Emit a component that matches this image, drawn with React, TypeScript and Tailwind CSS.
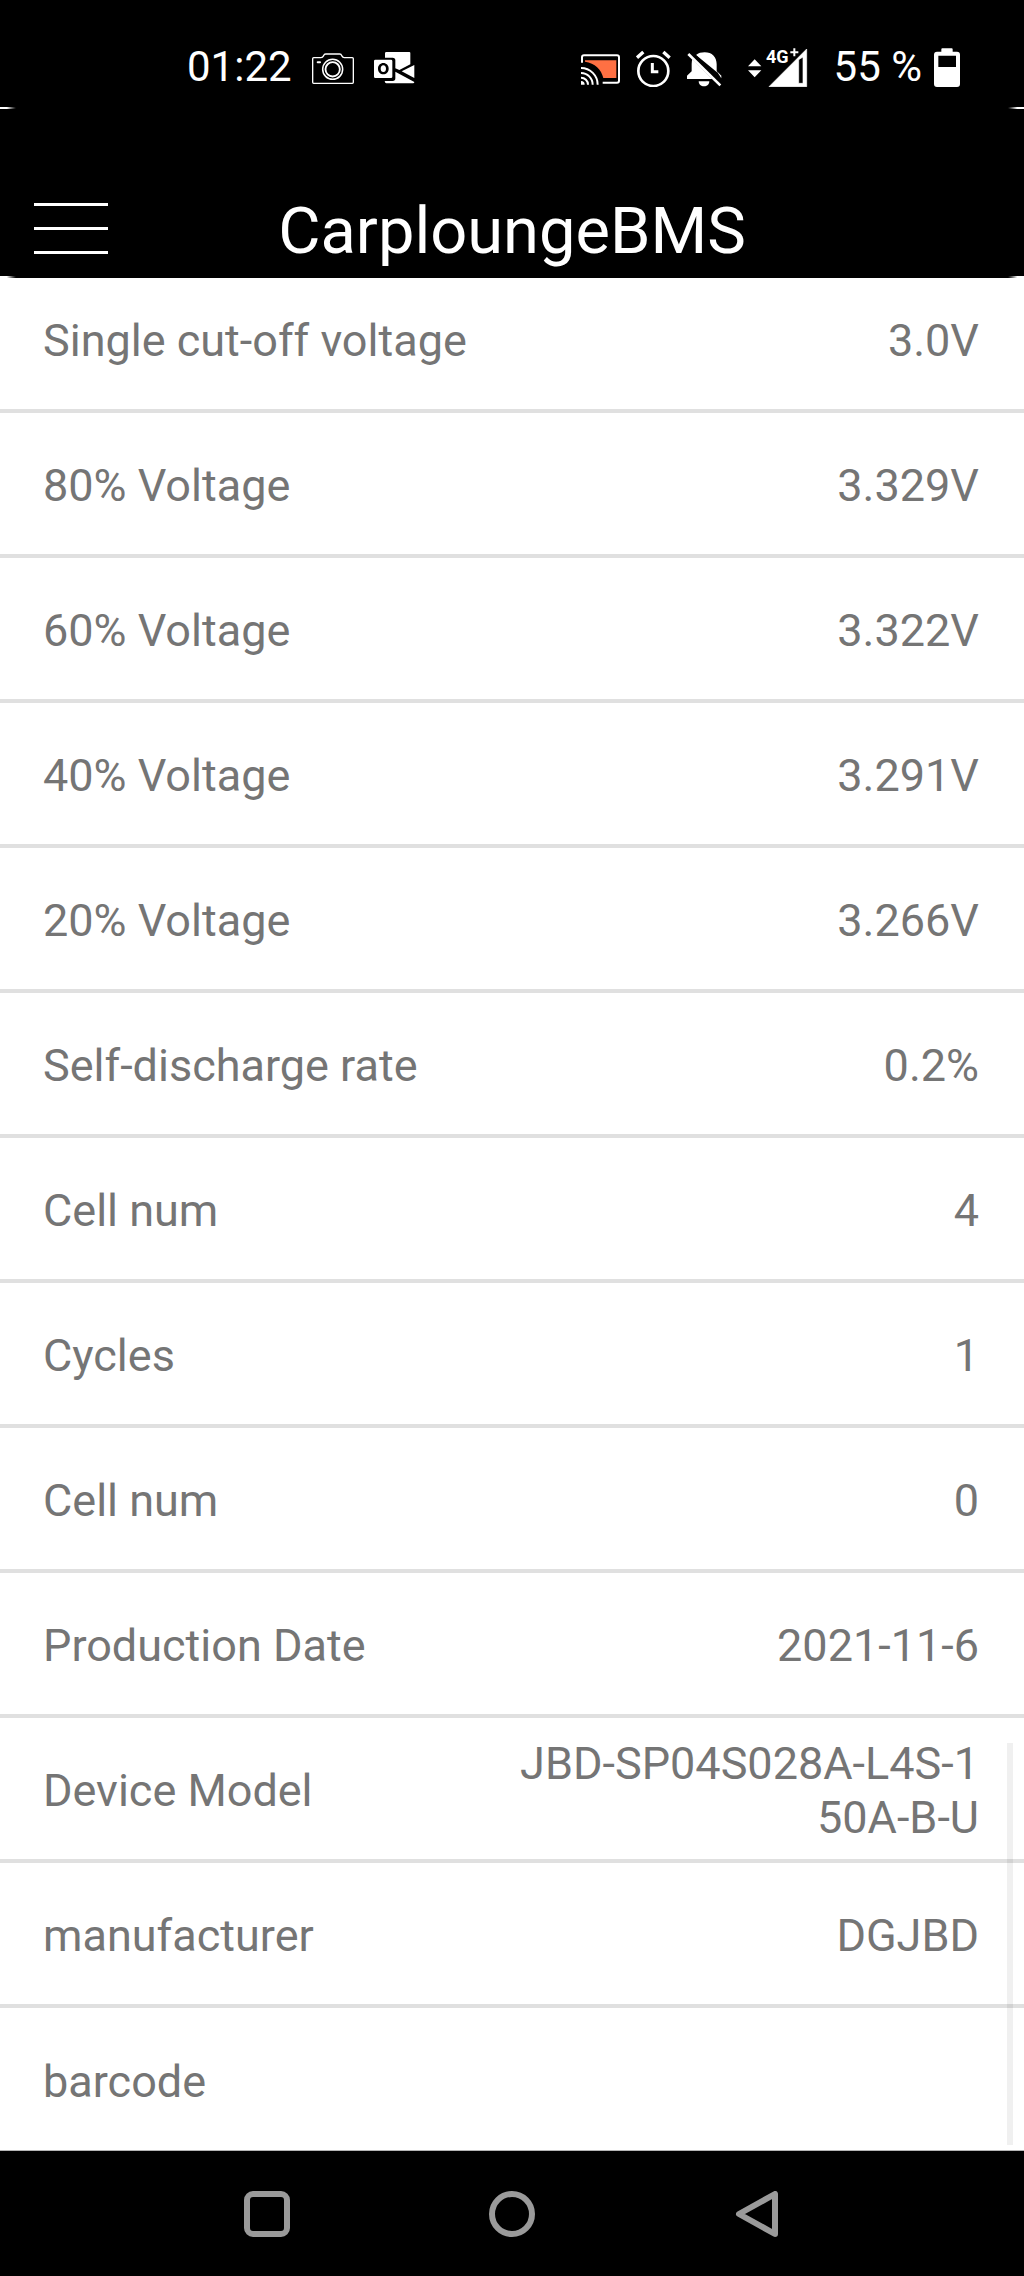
import { useState } from 'react';

interface InfoRow {
  label: string;
  value: string;
}

const rows: InfoRow[] = [
  { label: 'Single cut-off voltage', value: '3.0V' },
  { label: '80% Voltage', value: '3.329V' },
  { label: '60% Voltage', value: '3.322V' },
  { label: '40% Voltage', value: '3.291V' },
  { label: '20% Voltage', value: '3.266V' },
  { label: 'Self-discharge rate', value: '0.2%' },
  { label: 'Cell num', value: '4' },
  { label: 'Cycles', value: '1' },
  { label: 'Cell num', value: '0' },
  { label: 'Production Date', value: '2021-11-6' },
  { label: 'Device Model', value: 'JBD-SP04S028A-L4S-150A-B-U' },
  { label: 'manufacturer', value: 'DGJBD' },
  { label: 'barcode', value: '' },
];

const CameraIcon = () => (
  <svg className="h-10 w-[42px]" viewBox="0 0 126 120" fill="none" stroke="white" strokeWidth="4" aria-hidden="true">
    <path d="M5 32h22c4 0 6-2 8-6 1-4 3-5 6-5h42c3 0 5 1 6 5 2 4 4 6 8 6h24q3 0 3 3v71q0 3-3 3H5q-3 0-3-3V35q0-3 3-3z" />
    <circle cx="62" cy="67" r="30" strokeWidth="4.5" />
    <circle cx="62" cy="67" r="21.5" strokeWidth="5.5" />
    <rect x="14" y="43" width="13" height="6" rx="3" fill="white" stroke="none" />
  </svg>
);

const OutlookIcon = () => (
  <svg className="h-10 w-[41px]" viewBox="0 0 123 120" fill="white" aria-hidden="true">
    <path d="M37 15h69q3 0 3 3v34L76 69l-12-5V40q0-8-8-8H33V19q0-4 4-4z" />
    <path d="M121 54v39L83 73z" />
    <path d="M64 74l57 31q0 4-4 4H37q-4 0-5-7h24q8 0 8-8z" />
    <path
      fillRule="evenodd"
      d="M4 38h47q4 0 4 4v47q0 4-4 4H4q-4 0-4-4V42q0-4 4-4zM28 48c-9 0-16 7-16 17s7 17 16 17 16-7 16-17-7-17-16-17zM28 55c5 0 8 4 8 10s-3 10-8 10-8-4-8-10 3-10 8-10z"
    />
  </svg>
);

const CastIcon = () => (
  <svg className="h-10 w-[39px]" viewBox="0 0 117 120" fill="none" stroke="white" strokeWidth="6" aria-hidden="true">
    <path d="M3 47V31q0-6 6-6h99q6 0 6 6v70q0 6-6 6H65" />
    <path d="M12 40h94v53H67C61 67 42 49 12 44z" fill="#ff7043" stroke="none" />
    <path d="M0 63a50 50 0 0 1 50 50M0 78a35 35 0 0 1 35 35" />
    <path d="M0 92a21 21 0 0 1 21 21" />
    <path d="M0 102a11 11 0 0 1 11 11H0z" fill="white" stroke="none" />
  </svg>
);

const AlarmIcon = () => (
  <svg className="h-10 w-[35px]" viewBox="0 0 105 120" fill="none" stroke="white" strokeWidth="8" aria-hidden="true">
    <circle cx="52" cy="72" r="45" />
    <path d="M49 48v26h18" strokeWidth="9" />
    <path d="M3 32l19-17M82 15l19 17" strokeWidth="10" />
  </svg>
);

const BellOffIcon = () => (
  <svg className="h-10 w-[35px]" viewBox="0 0 105 120" fill="white" aria-hidden="true">
    <path d="M27 24c7-6 16-8 26-8 22 0 36 14 36 36v20l3 5z" />
    <path d="M16 37l60 59H0V86l14-13V50q0-7 2-13z" />
    <path d="M89 72l14 14v8z" />
    <path d="M35 103h32c0 9-7 15-16 15s-16-6-16-15z" />
    <path d="M11 14l92 90" stroke="black" strokeWidth="8" />
    <path d="M4 21l96 94" stroke="white" strokeWidth="8" />
  </svg>
);

const SignalIcon = () => (
  <svg className="h-10 w-[60px]" viewBox="0 0 180 120" fill="white" aria-hidden="true">
    <path d="M0 58l20-21 20 21zM0 70h40L20 91z" />
    <path fillRule="evenodd" d="M63 119L176 6v113zM152 38v71h13V30z" strokeWidth="2" stroke="white" strokeLinejoin="round" />
    <text x="54" y="48" fontFamily="Roboto" fontWeight="700" fontSize="54" stroke="black" strokeWidth="6" paintOrder="stroke">
      4G
    </text>
    <path d="M139 4v24M127 16h24" stroke="black" strokeWidth="12" />
    <path d="M139 4v24M127 16h24" stroke="white" strokeWidth="6" />
  </svg>
);

const BatteryIcon = () => (
  <svg className="h-10 w-[26px]" viewBox="0 0 78 120" fill="white" aria-hidden="true">
    <path
      fillRule="evenodd"
      d="M25 4h28q3 0 3 3v7h13q9 0 9 9v88q0 9-9 9H9q-9 0-9-9V23q0-9 9-9h13V7q0-3 3-3zM13 26v34h53V26z"
    />
  </svg>
);

// slivers of white left by the rounded screen corners
const CornerEdge = () => (
  <div className="flex justify-between" aria-hidden="true">
    <span className="h-0.5 w-[17px] bg-linear-to-r from-white from-40% to-black" />
    <span className="h-0.5 w-[17px] bg-linear-to-l from-white from-40% to-black" />
  </div>
);

const StatusBar = () => (
  <div className="flex h-[107px] items-center justify-between pt-[27px] pr-16 pl-[187px] text-[42px] leading-none text-white">
    <div className="flex items-center gap-5">
      <span>01:22</span>
      <CameraIcon />
      <OutlookIcon />
    </div>
    <div className="flex items-center gap-[26px]">
      <div className="flex items-center gap-4">
        <CastIcon />
        <AlarmIcon />
        <BellOffIcon />
      </div>
      <SignalIcon />
      <div className="flex items-center gap-3">
        <span>55 %</span>
        <BatteryIcon />
      </div>
    </div>
  </div>
);

const App: React.FC = () => {
  const [menuOpen, setMenuOpen] = useState(false);

  return (
    <div className="flex min-h-screen flex-col bg-black font-['Roboto',sans-serif]">
      <StatusBar />
      <header>
        <CornerEdge />
        <div className="grid h-[167px] grid-cols-[1fr_auto_1fr] items-center px-[34px] pt-[71px]">
          <button
            type="button"
            aria-label="Menu"
            aria-expanded={menuOpen}
            onClick={() => setMenuOpen(!menuOpen)}
            className="flex w-[74px] flex-col gap-[21px]"
          >
            <span className="h-[3px] w-full bg-white" />
            <span className="h-[3px] w-full bg-white" />
            <span className="h-[3px] w-full bg-white" />
          </button>
          <h1 className="pt-1.5 text-[65px] leading-none text-white">CarploungeBMS</h1>
        </div>
        <CornerEdge />
      </header>

      <main className="relative grow overflow-hidden bg-white">
        <dl className="-mt-2.5 text-[45px] leading-[54px] text-[#757575]">
          {rows.map((row, i) => (
            <div
              key={i}
              className="flex min-h-[145px] items-center justify-between border-b-4 border-[#e0e0e0] pt-[5px] pr-[45px] pl-[43px] last:min-h-[143px] last:border-b last:border-[#b5b5b5]"
            >
              <dt>{row.label}</dt>
              <dd className="w-1/2 text-right break-all">{row.value}</dd>
            </div>
          ))}
        </dl>
        <div className="absolute right-[11px] bottom-1.5 h-[402px] w-1.5 bg-black/6" aria-hidden="true" />
      </main>

      <nav className="grid h-[125px] grid-cols-3 items-center justify-items-center bg-black px-36">
        <button type="button" aria-label="Recent apps">
          <svg className="size-[46px]" viewBox="0 0 46 46" fill="none" stroke="#9a9a9a" strokeWidth="6">
            <rect x="3" y="3" width="40" height="40" rx="6" />
          </svg>
        </button>
        <button type="button" aria-label="Home">
          <svg className="size-[46px]" viewBox="0 0 46 46" fill="none" stroke="#9a9a9a" strokeWidth="6">
            <circle cx="23" cy="23" r="20" />
          </svg>
        </button>
        <button type="button" aria-label="Back">
          <svg className="size-[46px]" viewBox="0 0 46 46" fill="none" stroke="#9a9a9a" strokeWidth="6" strokeLinejoin="round">
            <path d="M41 3v40L5 23z" />
          </svg>
        </button>
      </nav>
    </div>
  );
};

export default App;
